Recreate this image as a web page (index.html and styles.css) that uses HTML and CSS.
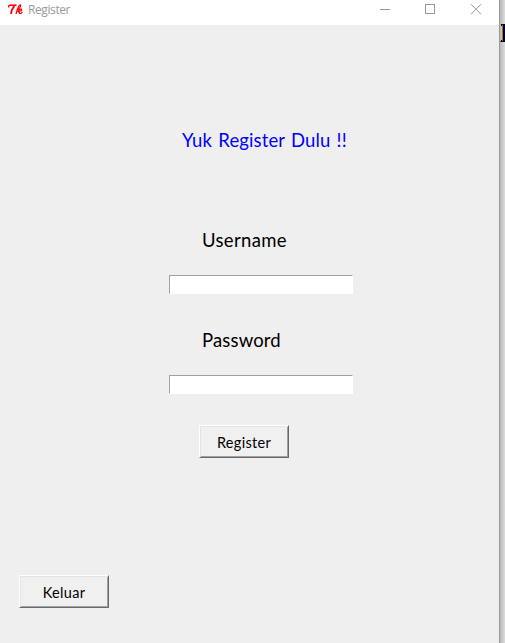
FILE: index.html
```html
<!DOCTYPE html>
<html lang="id">
<head>
<meta charset="utf-8">
<title>Register</title>
<link rel="stylesheet" href="styles.css">
</head>
<body>
<div class="window">
  <header class="titlebar">
    <svg class="logo" width="16" height="12" viewBox="0 0 16 12" fill="none" stroke="#f00" aria-hidden="true">
      <path d="M0.500 3.500V2L2 1.200H7.500L8.500 .8" stroke-width="1.500"/>
      <path d="M6.300 2L3.800 6L3 10" stroke-width="1.800"/>
      <path d="M12.500 .5L10.500 2.500L8.500 8L8 10M12.500 .5V2.500L9.500 6.500" stroke-width="1.200"/>
      <path d="M9.500 8L12 5.200H13.500V6.500L11 7.500L11.500 9.500H12.800L14.500 8" stroke-width="1.200"/>
    </svg>
    <span class="caption">Register</span>
    <svg class="controls" width="102" height="12" viewBox="0 0 102 12" fill="none" stroke="#999" aria-hidden="true">
      <path d="M0 5.500H10"/>
      <rect x="45.500" y=".5" width="9" height="9"/>
      <path d="M91 .2L101 10.200M101 .2L91 10.200"/>
    </svg>
  </header>
  <main class="form">
    <h1 class="heading">Yuk Register Dulu !!</h1>
    <label class="label username" for="user">Username</label>
    <input class="entry" id="user" type="text">
    <label class="label password" for="pass">Password</label>
    <input class="entry" id="pass" type="password">
    <button class="button register">Register</button>
    <button class="button exit">Keluar</button>
  </main>
</div>
<aside class="backdrop">
  <svg class="sliver" width="5" height="18" viewBox="0 0 5 18" shape-rendering="crispEdges" aria-hidden="true">
    <path d="M1 0H5V18H1V16H2V2H1Z" fill="#000"/>
    <path d="M2 1H3V17H2Z" fill="#b56b1c"/>
    <path d="M4 1H5V17H4Z" fill="#000050"/>
    <path d="M0 17H1V18H0Z" fill="#387077"/>
  </svg>
</aside>
</body>
</html>
```

FILE: styles.css
```css
* { box-sizing: border-box; }
body {
  margin: 0;
  display: flex;
  height: 643px;
  overflow: hidden;
  background: #d8d8d8;
  font-family: Lato, "Liberation Sans", sans-serif;
}
.window {
  width: 500px;
  border-right: 1px solid #999;
  background: #efefef;
}
.titlebar {
  display: flex;
  align-items: flex-start;
  height: 25px;
  padding: 4px 17px 0 8px;
  background: #fff;
}
.caption {
  margin: -2px 0 0 4px;
  font: 12px/16px "Open Sans", sans-serif;
  letter-spacing: -0.4px;
  color: #999;
}
.controls { margin-left: auto; }
.form {
  display: flex;
  flex-direction: column;
  align-items: flex-start;
}
.heading, .label {
  font-size: 18.5px;
  font-weight: 400;
  line-height: 24px;
  white-space: nowrap;
  color: #000;
}
.heading {
  margin: 103px 0 0 182px;
  letter-spacing: 0.13px;
  word-spacing: 1.3px;
  color: #00f;
}
.label { margin-left: 202px; }
.username {
  margin-top: 76px;
  letter-spacing: 0.35px;
}
.password {
  margin-top: 34px;
  letter-spacing: 0.15px;
}
.entry {
  width: 184px;
  height: 19px;
  margin: 23px 0 0 169px;
  padding: 0 2px;
  border: 1px solid;
  border-color: #a0a0a0 #fff #fff #a0a0a0;
  border-radius: 0;
  background: #fff;
  outline: none;
}
.button {
  width: 90px;
  height: 33px;
  padding: 2px 0 0;
  border: 1px solid;
  border-color: #fff #696969 #696969 #fff;
  border-radius: 0;
  background: #f0f0f0;
  box-shadow: inset 1px 1px #e3e3e3, inset -1px -1px #a0a0a0;
  font: 14.5px/18px Lato, sans-serif;
  letter-spacing: 0.3px;
  color: #000;
}
.register { margin: 31px 0 0 199px; }
.exit { margin: 117px 0 0 19px; }
.backdrop {
  width: 5px;
  padding-top: 24px;
  background: linear-gradient(to right, #b8b8b8, #dcdcdc);
}
.sliver { display: block; }
```
